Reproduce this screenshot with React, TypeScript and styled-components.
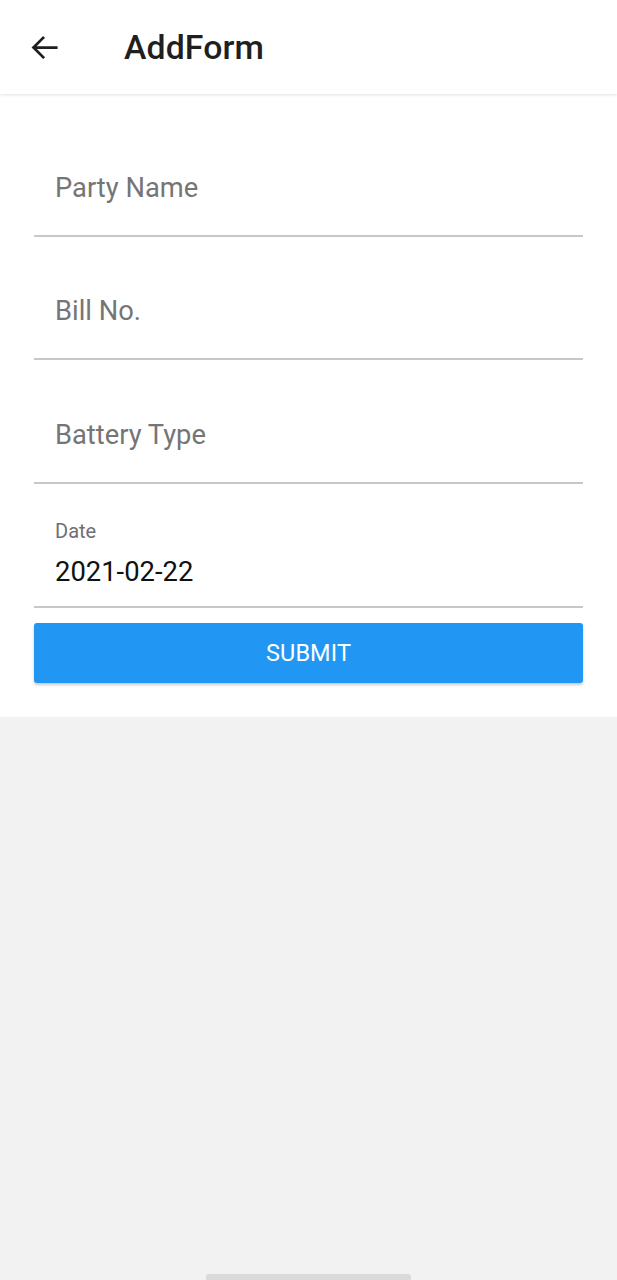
import React from "react";
import styled, { createGlobalStyle } from "styled-components";

const Global = createGlobalStyle`
  html, body { margin: 0; padding: 0; background: #f2f2f2; }
  body { font-family: Roboto, "Noto Sans", sans-serif; }
  #root { min-height: 1280px; }
`;

const Page = styled.div`
  width: 617px;
  height: 1280px;
  background: #f2f2f2;
  display: flex;
  flex-direction: column;
  position: relative;
  overflow: hidden;
`;

const Header = styled.header`
  height: 94px;
  background: #fff;
  display: flex;
  align-items: center;
  box-shadow: 0 1px 3px rgba(0, 0, 0, 0.12);
  position: relative;
  z-index: 1;
  box-sizing: border-box;
  padding-left: 28px;
`;

const BackButton = styled.button`
  width: 33px;
  height: 33px;
  padding: 0;
  border: none;
  background: transparent;
  display: flex;
  align-items: center;
  justify-content: center;
  color: #1f1f1f;
`;

const Title = styled.h1`
  margin: 0 0 0 63px;
  font-size: 33.8px;
  font-weight: 500;
  color: #1f1f1f;
  letter-spacing: 0.1px;
`;

const Form = styled.form`
  background: #fff;
  padding: 19px 34px 34px;
  display: flex;
  flex-direction: column;
`;

const Field = styled.div<{ $filled?: boolean }>`
  height: 123.7px;
  box-sizing: border-box;
  border-bottom: 2px solid #c8c8c8;
  display: flex;
  flex-direction: column;
  justify-content: flex-end;
  padding: ${(p) => (p.$filled ? "0 21px 18px" : "0 21px 31px")};
`;

const Placeholder = styled.span`
  font-size: 27.3px;
  line-height: 32px;
  color: #757575;
`;

const Label = styled.span`
  font-size: 20px;
  line-height: 24px;
  color: #6f6f6f;
  margin-bottom: 13px;
`;

const Value = styled.span`
  font-size: 27.4px;
  line-height: 32px;
  color: #111;
`;

const Submit = styled.button`
  margin-top: 15px;
  height: 60px;
  border: none;
  border-radius: 3px;
  background: #2196f3;
  color: #fff;
  font-family: Roboto, sans-serif;
  font-size: 23.5px;
  letter-spacing: 0.1px;
  box-shadow: 0 2px 3px rgba(0, 0, 0, 0.22);
`;

const NavPill = styled.div`
  position: absolute;
  bottom: 0;
  left: 206px;
  width: 205px;
  height: 6px;
  border-radius: 3px 3px 0 0;
  background: #dadada;
`;

export default function App() {
  return (
    <Page>
      <Global />
      <Header>
        <BackButton type="button" aria-label="back">
          <svg width="33" height="33" viewBox="0 0 24 24" fill="none">
            <path
              d="M20.5 12H4.5M11 5l-7 7 7 7"
              stroke="currentColor"
              strokeWidth="2"
              strokeLinecap="square"
            />
          </svg>
        </BackButton>
        <Title>AddForm</Title>
      </Header>
      <Form onSubmit={(e) => e.preventDefault()}>
        <Field>
          <Placeholder>Party Name</Placeholder>
        </Field>
        <Field>
          <Placeholder>Bill No.</Placeholder>
        </Field>
        <Field>
          <Placeholder>Battery Type</Placeholder>
        </Field>
        <Field $filled>
          <Label>Date</Label>
          <Value>2021-02-22</Value>
        </Field>
        <Submit type="submit">SUBMIT</Submit>
      </Form>
      <NavPill />
    </Page>
  );
}
